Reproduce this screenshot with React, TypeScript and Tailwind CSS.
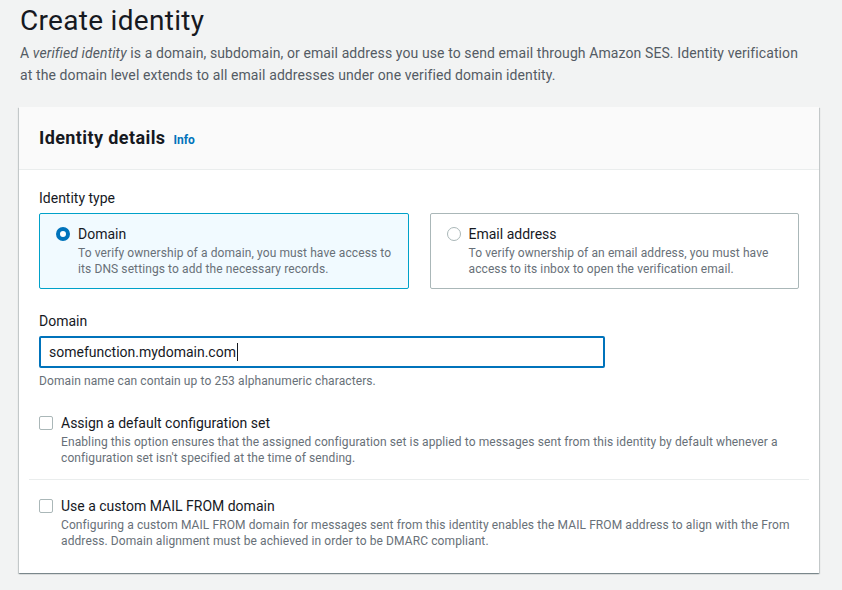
function Radio({ checked }: { checked: boolean }) {
  return checked ? (
    <span className="mt-[4px] box-border h-[14px] w-[14px] shrink-0 rounded-full border-[4px] border-[#0073bb] bg-white" />
  ) : (
    <span className="mt-[4px] box-border h-[14px] w-[14px] shrink-0 rounded-full border border-[#aab7b8] bg-white" />
  )
}

function Tile({ checked, title, desc }: { checked: boolean; title: string; desc: string }) {
  return (
    <div
      className={
        checked
          ? 'flex gap-[8px] rounded-[2px] border border-[#00a1c9] bg-[#f1faff] pl-[16px] pr-[16px] pt-[9px] pb-[11px]'
          : 'flex gap-[8px] rounded-[2px] border border-[#aab7b8] bg-white pl-[16px] pr-[16px] pt-[9px] pb-[11px]'
      }
    >
      <Radio checked={checked} />
      <div>
        <div className="text-[14px] leading-[22px] text-[#16191f]">{title}</div>
        <div className="text-[12px] leading-[16px] tracking-[0.1px] text-[#687078]">{desc}</div>
      </div>
    </div>
  )
}

function Check({ title, desc }: { title: string; desc: string }) {
  return (
    <div className="flex gap-[8px]">
      <span className="mt-[4px] box-border h-[14px] w-[14px] shrink-0 rounded-[2px] border border-[#aab7b8] bg-white" />
      <div>
        <div className="text-[14px] leading-[22px] text-[#16191f]">{title}</div>
        <div className="text-[12px] leading-[16px] tracking-[0.1px] text-[#687078]">{desc}</div>
      </div>
    </div>
  )
}

export default function App() {
  return (
    <div className="min-h-screen bg-[#f2f3f3] px-[19px] pt-[3px] font-['Roboto',sans-serif]">
      {/* Page header */}
      <h1 className="pl-[1px] text-[28px] leading-[36px] font-normal tracking-[0.3px] text-[#16191f]">Create identity</h1>
      <p className="mt-[3px] w-[790px] pl-[1px] text-[14px] leading-[22px] tracking-[0.1px] text-[#545b64]">
        A <i>verified identity</i> is a domain, subdomain, or email address you use to send email through Amazon SES.
        Identity verification at the domain level extends to all email addresses under one verified domain identity.
      </p>

      {/* Card */}
      <div className="mt-[21px] w-[800px] bg-white shadow-[0_1px_1px_0_rgba(0,28,36,0.3),1px_1px_1px_0_rgba(0,28,36,0.15),-1px_1px_1px_0_rgba(0,28,36,0.15)]">
        <div className="flex items-baseline gap-[8px] border-b border-[#eaeded] bg-[#fafafa] px-[20px] py-[20px]">
          <h2 className="text-[18px] leading-[22px] font-bold tracking-[0.4px] text-[#16191f]">Identity details</h2>
          <a className="text-[12px] font-bold text-[#0073bb]">Info</a>
        </div>

        <div className="px-[20px] pt-[17px] pb-[24px]">
          <div className="text-[14px] leading-[22px] text-[#16191f]">Identity type</div>
          <div className="mt-[4px] grid grid-cols-2 gap-[21px]">
            <Tile
              checked
              title="Domain"
              desc="To verify ownership of a domain, you must have access to its DNS settings to add the necessary records."
            />
            <Tile
              checked={false}
              title="Email address"
              desc="To verify ownership of an email address, you must have access to its inbox to open the verification email."
            />
          </div>

          <div className="mt-[21px] text-[14px] leading-[22px] text-[#16191f]">Domain</div>
          <div className="mt-[4px] flex h-[32px] w-[566px] items-center rounded-[2px] border-2 border-[#0073bb] px-[8px] text-[14px] text-[#16191f]">
            somefunction.mydomain.com
            <span className="ml-[1px] h-[18px] w-px bg-[#16191f]" />
          </div>
          <div className="mt-[5px] text-[12px] leading-[16px] tracking-[0.1px] text-[#687078]">
            Domain name can contain up to 253 alphanumeric characters.
          </div>

          <div className="mt-[23px]">
            <Check
              title="Assign a default configuration set"
              desc="Enabling this option ensures that the assigned configuration set is applied to messages sent from this identity by default whenever a configuration set isn't specified at the time of sending."
            />
          </div>
          <div className="-mx-[10px] mt-[13px] border-t border-[#eaeded]" />
          <div className="mt-[15px]">
            <Check
              title="Use a custom MAIL FROM domain"
              desc="Configuring a custom MAIL FROM domain for messages sent from this identity enables the MAIL FROM address to align with the From address. Domain alignment must be achieved in order to be DMARC compliant."
            />
          </div>
        </div>
      </div>
    </div>
  )
}
